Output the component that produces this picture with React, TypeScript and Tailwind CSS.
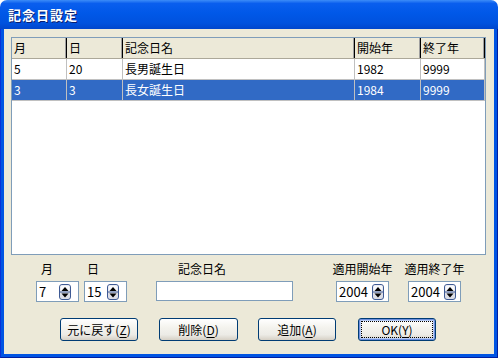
import React from "react";

const font = { fontFamily: '"Noto Sans CJK JP", "Noto Sans", sans-serif' };

const cols = [
  { label: "月", w: "w-[55px]" },
  { label: "日", w: "w-[56px]" },
  { label: "記念日名", w: "w-[232px]" },
  { label: "開始年", w: "w-[66px]" },
  { label: "終了年", w: "w-[64px]" },
];

const rows = [
  { cells: ["5", "20", "長男誕生日", "1982", "9999"], selected: false },
  { cells: ["3", "3", "長女誕生日", "1984", "9999"], selected: true },
];

function SpinButton() {
  return (
    <svg width="12" height="16" viewBox="0 0 12 16" className="shrink-0">
      <rect x="0.5" y="0.5" width="11" height="15" rx="2.5" fill="#DCDEE6" stroke="#3E5A94" />
      <rect x="1.5" y="1.5" width="9" height="6" rx="1" fill="#F8F9FC" />
      <line x1="1" y1="8" x2="11" y2="8" stroke="#3E5A94" />
      <path d="M2.5 7 L6 3 L9.5 7 Z" fill="#000" />
      <path d="M2.5 9.5 L6 13.5 L9.5 9.5 Z" fill="#000" />
    </svg>
  );
}

function SpinBox({ value, w, pr }: { value: string; w: string; pr: string }) {
  return (
    <div className={`${w} h-[21px] border border-[#7F9DB9] bg-white flex items-center pl-[2px] ${pr}`}>
      <span className="leading-none text-[13px]">{value}</span>
      <span className="ml-auto flex">
        <SpinButton />
      </span>
    </div>
  );
}

function XpButton({ text, mn, def, w }: { text: string; mn: string; def?: boolean; w: string }) {
  return (
    <button
      className={`${w} h-[23px] rounded-[3px] border border-[#003C74] bg-[linear-gradient(to_bottom,#FFFFFF_0%,#F4F3EE_40%,#ECEBE6_75%,#D6D0C5_100%)] flex items-center justify-center p-[2px] ${
        def ? "shadow-[inset_0_0_0_1px_#6E8FDD,inset_0_0_0_2px_#B8CCF5]" : ""
      }`}
    >
      <span
        className={`w-full h-full flex items-center justify-center leading-none text-black ${
          def ? "outline-1 outline-dotted outline-[#000] -outline-offset-1" : ""
        }`}
      >
        {text}(<span className="underline underline-offset-2">{mn}</span>)
      </span>
    </button>
  );
}

export default function App() {
  return (
    <div className="w-[498px] h-[358px] flex flex-col text-[12px] text-black" style={font}>
      {/* title bar */}
      <div className="h-[29px] shrink-0 rounded-t-[7px] bg-[linear-gradient(to_bottom,#3C8CF8_0%,#0A5EEE_12%,#0058E8_45%,#0052DE_80%,#0046CC_100%)] flex items-center pl-[8px]">
        <span className="text-white font-bold text-[13px] tracking-[1px] [text-shadow:1px_1px_0_#0A1E6E]">
          記念日設定
        </span>
      </div>
      {/* frame */}
      <div className="flex-1 flex bg-[#0054E3] border-l-[1px] border-l-[#0831D9] border-r-[1px] border-r-[#001EA0] border-b-[1px] border-b-[#001EA0]">
        <div className="flex-1 flex flex-col mx-[3px] mb-[3px] bg-[#ECE9D8]">
          {/* table */}
          <div className="mt-[8px] ml-[7px] w-[475px] h-[218px] border border-[#7F9DB9] bg-white flex flex-col">
            <div className="h-[21px] flex bg-[#ECE9D8] border-b border-b-[#ACA899]">
              {cols.map((c) => (
                <div
                  key={c.label}
                  className={`${c.w} h-full flex items-center pl-[2px] shadow-[inset_-1px_0_0_#000,inset_-2px_0_0_#A0A0A0]`}
                >
                  {c.label}
                </div>
              ))}
            </div>
            {rows.map((r, i) => (
              <div
                key={i}
                className={`h-[21px] flex border-b border-b-[#C0C0C0] ${
                  r.selected ? "bg-[#316AC5] text-white" : "bg-white"
                }`}
              >
                {r.cells.map((v, j) => (
                  <div key={j} className={`${cols[j].w} h-full flex items-center pl-[2px] border-r border-r-[#C0C0C0]`}>
                    {v}
                  </div>
                ))}
              </div>
            ))}
          </div>
          {/* fields */}
          <div className="mt-[6px] flex items-start">
            <div className="ml-[32px] flex flex-col">
              <span className="h-[16px] leading-[16px] pl-[5px]">月</span>
              <div className="mt-[4px]">
                <SpinBox value="7" w="w-[43px]" pr="pr-[7px]" />
              </div>
            </div>
            <div className="ml-[5px] flex flex-col">
              <span className="h-[16px] leading-[16px] pl-[3px]">日</span>
              <div className="mt-[4px]">
                <SpinBox value="15" w="w-[43px]" pr="pr-[7px]" />
              </div>
            </div>
            <div className="ml-[29px] flex flex-col">
              <span className="h-[16px] leading-[16px] pl-[22px]">記念日名</span>
              <div className="mt-[4px] w-[137px] h-[20px] border border-[#7F9DB9] bg-white" />
            </div>
            <div className="ml-[43px] w-[53px] flex flex-col items-center">
              <span className="h-[16px] leading-[16px] whitespace-nowrap">適用開始年</span>
              <div className="mt-[4px]">
                <SpinBox value="2004" w="w-[53px]" pr="pr-[4px]" />
              </div>
            </div>
            <div className="ml-[19px] w-[53px] flex flex-col items-center">
              <span className="h-[16px] leading-[16px] whitespace-nowrap">適用終了年</span>
              <div className="mt-[4px]">
                <SpinBox value="2004" w="w-[53px]" pr="pr-[4px]" />
              </div>
            </div>
          </div>
          {/* buttons */}
          <div className="mt-[16px] ml-[56px] flex">
            <XpButton text="元に戻す" mn="Z" w="w-[78px]" />
            <div className="ml-[21px]">
              <XpButton text="削除" mn="D" w="w-[79px]" />
            </div>
            <div className="ml-[20px]">
              <XpButton text="追加" mn="A" w="w-[78px]" />
            </div>
            <div className="ml-[22px]">
              <XpButton text="OK" mn="Y" def w="w-[78px]" />
            </div>
          </div>
        </div>
      </div>
    </div>
  );
}
